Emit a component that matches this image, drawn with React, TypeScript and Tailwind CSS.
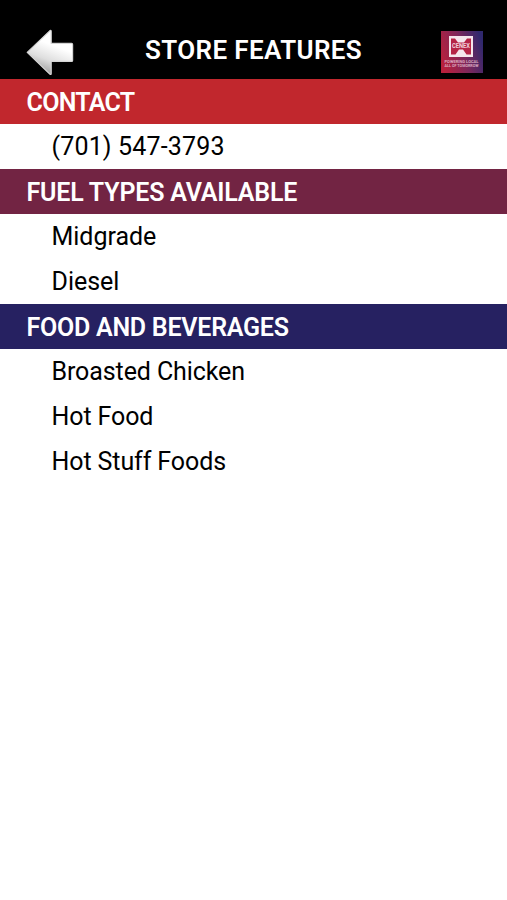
interface Section {
  title: string;
  barClass: string;
  itemClass: string;
  items: string[];
}

const sections: Section[] = [
  {
    title: "CONTACT",
    barClass: "bg-[#c1272d] tracking-[-0.7px]",
    itemClass: "tracking-[0.16px]",
    items: ["(701) 547-3793"],
  },
  {
    title: "FUEL TYPES AVAILABLE",
    barClass: "bg-[#722443] tracking-[-0.2px]",
    itemClass: "tracking-[-0.03px]",
    items: ["Midgrade", "Diesel"],
  },
  {
    title: "FOOD AND BEVERAGES",
    barClass: "bg-[#262161] tracking-[-0.25px]",
    itemClass: "tracking-[-0.1px]",
    items: ["Broasted Chicken", "Hot Food", "Hot Stuff Foods"],
  },
];

function BackArrow() {
  return (
    <svg width="48" height="47" viewBox="0 0 48 47" aria-hidden="true">
      <defs>
        <linearGradient id="arrow-fill" x1="0.35" y1="1" x2="0.6" y2="0.35">
          <stop offset="0" stopColor="#969696" />
          <stop offset="0.5" stopColor="#dedede" />
          <stop offset="1" stopColor="#ffffff" />
        </linearGradient>
      </defs>
      <path
        d="M1.2 23.4 L24 1.6 Q25.2 0.8 25.2 2.4 V14.4 H45.6 Q46.6 14.4 46.6 15.4 V31.4 Q46.6 32.4 45.6 32.4 H25.2 V44.4 Q25.2 46 24 45.2 Z"
        fill="url(#arrow-fill)"
        stroke="#d4d4d4"
        strokeWidth="1.2"
        strokeLinejoin="round"
      />
    </svg>
  );
}

function StoreLogo() {
  return (
    <svg width="42" height="42" viewBox="0 0 42 42" aria-hidden="true">
      <defs>
        <linearGradient id="logo-bg" x1="0" y1="0.65" x2="1" y2="0.35">
          <stop offset="0" stopColor="#b8203c" />
          <stop offset="0.5" stopColor="#80275a" />
          <stop offset="1" stopColor="#30286e" />
        </linearGradient>
      </defs>
      <rect width="42" height="42" fill="url(#logo-bg)" />
      <rect x="8" y="5" width="24" height="21" fill="#f4e6ec" />
      <path d="M10 7.5 H14 L17 11.5 H23 L26 7.5 H30 V23.5 H25.5 L22 18.5 H18 L14.5 23.5 H10 Z" fill="#b52546" />
      <text
        x="11"
        y="17.2"
        textLength="18"
        lengthAdjust="spacingAndGlyphs"
        fontSize="6.5"
        fontWeight="700"
        fill="#efd0da"
      >
        CENEX
      </text>
      <g fontSize="4" fontWeight="700" fill="#dba9bf">
        <text x="3.5" y="31.6" textLength="34" lengthAdjust="spacingAndGlyphs">
          POWERING LOCAL
        </text>
        <text x="3.5" y="36" textLength="34" lengthAdjust="spacingAndGlyphs">
          ALL OF TOMORROW
        </text>
      </g>
    </svg>
  );
}

export default function App() {
  return (
    <div className="min-h-screen w-full bg-white font-[Roboto,sans-serif] text-[25px] leading-[45px] whitespace-nowrap">
      <header className="flex h-[79px] items-start bg-black pr-6 pl-[26px]">
        <button type="button" aria-label="Back" className="mt-[29px]">
          <BackArrow />
        </button>
        <h1 className="mt-[28px] ml-[71px] text-[26px] font-semibold tracking-[0.37px] text-white">STORE FEATURES</h1>
        <div className="mt-[31px] ml-auto leading-none">
          <StoreLogo />
        </div>
      </header>
      <main>
        {sections.map((section) => (
          <section key={section.title}>
            <h2 className={`h-[45px] pt-px pl-[26.5px] font-semibold text-white ${section.barClass}`}>
              {section.title}
            </h2>
            <ul>
              {section.items.map((item) => (
                <li key={item} className={`h-[45px] pl-[51.5px] text-black ${section.itemClass}`}>
                  {item}
                </li>
              ))}
            </ul>
          </section>
        ))}
      </main>
    </div>
  );
}
